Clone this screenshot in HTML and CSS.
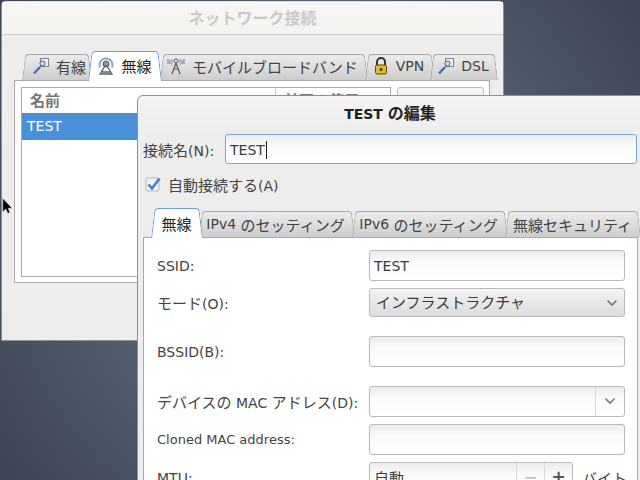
FILE: index.html
```html
<!DOCTYPE html>
<html lang="ja">
<head>
<meta charset="utf-8">
<title>ネットワーク接続</title>
<link rel="stylesheet" href="styles.css">
</head>
<body>
<main class="desktop">
  <section class="window back">
    <header class="back-title">ネットワーク接続</header>
    <div class="back-body">
      <nav class="tabs back-tabs">
        <span class="tab t-wired"><svg class="ico" viewBox="0 0 18 18"><rect x="8.500" y="1.500" width="8" height="8" fill="#eef1f4" stroke="#7d8690"/><path d="M2 16.500 8 10" stroke="#3d6fb0" stroke-width="2.400"/><circle cx="10.500" cy="6.500" r="2.600" fill="#cfd8e4" stroke="#56606c"/></svg><span class="ja">有線</span></span>
        <span class="tab active t-wifi"><svg class="ico" viewBox="0 0 18 18"><path d="M3 10.500a6.500 6.500 0 1 1 12 0" fill="none" stroke="#8fa6c8" stroke-width="2"/><circle cx="9" cy="7" r="3" fill="#8d97a6" stroke="#4f5966"/><path d="M3 17 8 9h2l5 8zM5 15h8" fill="none" stroke="#5a626c" stroke-width="1.300"/></svg><span class="ja">無線</span></span>
        <span class="tab t-mobile"><svg class="ico wide" viewBox="0 0 20 18"><path d="M2 2v5M4 3v4M16 3v4M18 2v5" stroke="#6e8fb8" stroke-width="1.200"/><path d="M6 2v6M14 2v6" stroke="#8a939e"/><circle cx="10" cy="4" r="2" fill="none" stroke="#555"/><path d="M10 6 6 17M10 6l4 11M8 12h4" fill="none" stroke="#555" stroke-width="1.200"/></svg><span class="ja">モバイルブロードバンド</span></span>
        <span class="tab t-vpn"><svg class="ico" viewBox="0 0 18 18"><path d="M5 8V5a4 4 0 0 1 8 0v3" fill="none" stroke="#333" stroke-width="2"/><rect x="3.500" y="8" width="11" height="9" rx="1.500" fill="#e8b923" stroke="#5c4a10"/><circle cx="9" cy="12.500" r="1.500" fill="#3a3008"/></svg>VPN</span>
        <span class="tab t-dsl"><svg class="ico" viewBox="0 0 18 18"><rect x="8.500" y="1.500" width="8" height="8" fill="#eef1f4" stroke="#7d8690"/><path d="M2 16.500 8 10" stroke="#3d6fb0" stroke-width="2.400"/><circle cx="10.500" cy="6.500" r="2.600" fill="#cfd8e4" stroke="#56606c"/></svg>DSL</span>
      </nav>
      <div class="back-frame">
        <div class="tree">
          <div class="tree-head"><span class="col-name ja">名前</span><span class="col-used ja">前回の使用</span></div>
          <div class="tree-row">TEST</div>
        </div>
        <div class="side-button ja">追加</div>
      </div>
    </div>
  </section>

  <section class="window front">
    <header class="front-title">TEST <span class="ja-title">の編集</span></header>
    <div class="name-row">
      <label class="name-label"><span class="ja">接続名</span>(N):</label>
      <div class="entry focused">TEST<i class="caret"></i></div>
    </div>
    <div class="check-row">
      <svg class="check" viewBox="0 0 16 16"><rect x="1" y="2" width="13" height="13" rx="2" fill="#f4f4f4" stroke="#b5b5b5"/><path d="M3.500 8.500 7 12.500 14.500 2.500" fill="none" stroke="#3f7fcf" stroke-width="2.600"/></svg>
      <span><span class="ja">自動接続する</span>(A)</span>
    </div>
    <nav class="tabs front-tabs">
      <span class="tab active f1"><span class="ja">無線</span></span>
      <span class="tab f2">IPv4&nbsp;<span class="ja">のセッティング</span></span>
      <span class="tab f3">IPv6&nbsp;<span class="ja">のセッティング</span></span>
      <span class="tab f4"><span class="ja">無線セキュリティ</span></span>
    </nav>
    <div class="form-frame">
      <div class="form-row r-ssid"><label>SSID:</label><div class="entry">TEST</div></div>
      <div class="form-row r-mode"><label><span class="ja">モード</span>(O):</label><div class="entry combo"><span class="ja">インフラストラクチャ</span><svg class="chev" viewBox="0 0 12 8"><path d="M1.500 1.500 6 6l4.500-4.500" fill="none" stroke="#777" stroke-width="1.600"/></svg></div></div>
      <div class="form-row r-bssid"><label>BSSID(B):</label><div class="entry"></div></div>
      <div class="form-row r-device"><label><span class="ja">デバイスの</span> MAC <span class="ja">アドレス</span>(D):</label><div class="entry with-button"><span class="drop"><svg class="chev" viewBox="0 0 12 8"><path d="M1.500 1.500 6 6l4.500-4.500" fill="none" stroke="#777" stroke-width="1.600"/></svg></span></div></div>
      <div class="form-row r-cloned"><label class="small">Cloned MAC address:</label><div class="entry"></div></div>
      <div class="form-row r-mtu"><label>MTU:</label><div class="entry spin"><span class="ja">自動</span><span class="spin-btn minus">−</span><span class="spin-btn plus">+</span></div><span class="unit ja">バイト</span></div>
    </div>
  </section>

  <svg class="pointer" viewBox="0 0 14 20"><path d="M2 1v16l3.500-3.500L8 18.500l2.500-1-2.200-5H13z" fill="#000" stroke="#ddd" stroke-width=".6"/></svg>
</main>
</body>
</html>
```
FILE: styles.css
```css
* { box-sizing: border-box; }
html, body { margin: 0; height: 100%; overflow: hidden; }
body {
  font-family: "DejaVu Sans", "Noto Sans CJK JP", sans-serif;
  font-size: 14px;
  color: #3a3a3a;
}
.ja { font-family: "Noto Sans CJK JP", sans-serif; font-size: 15px; }
.ja-title { font-family: "Noto Sans CJK JP", sans-serif; font-size: 16px; }
.desktop {
  position: relative;
  width: 640px;
  height: 480px;
  overflow: hidden;
  background: radial-gradient(circle at 320px 240px, #5c6778 0, #525d6f 220px, #3b4053 420px);
}
.window { position: absolute; background: #ededed; }

/* back window */
.back {
  left: 1px; top: 1px; width: 503px; height: 340px;
  border: 1px solid #8f8f8f;
  border-top-color: #ddd;
  border-radius: 5px 5px 0 0;
}
.back-title {
  height: 33px;
  background: linear-gradient(#f6f6f4, #f3f3f1);
  border-bottom: 1px solid #d0d0ce;
  color: #cacaca;
  font-family: "Noto Sans CJK JP", sans-serif;
  font-weight: bold;
  font-size: 16px;
  line-height: 30px;
  text-align: center;
}
.back-body { padding: 19px 0 0 12px; }

/* tabs: two skewed halves give the slanted sides */
.tabs { display: flex; height: 26px; align-items: stretch; }
.tab {
  position: relative;
  isolation: isolate;
  display: flex;
  align-items: center;
  justify-content: center;
  white-space: nowrap;
  color: #444;
  font-size: 14px;
  flex: none;
}
.tab::before,
.tab::after {
  content: "";
  position: absolute;
  top: 0;
  bottom: 0;
  width: calc(50% + 1px);
  z-index: -1;
  background: linear-gradient(#ececec, #cdcdcd);
  border-top: 1px solid #a9a9a9;
}
.tab::before {
  left: 0;
  border-left: 1px solid #a9a9a9;
  border-top-left-radius: 4px;
  transform: skewX(-7deg);
  transform-origin: bottom left;
}
.tab::after {
  right: 0;
  border-right: 1px solid #a9a9a9;
  border-top-right-radius: 4px;
  transform: skewX(7deg);
  transform-origin: bottom right;
}
.tab.active { color: #222; z-index: 1; margin-top: -3px; margin-bottom: -1px; padding-top: 1px; }
.tab.active::before,
.tab.active::after { background: #fff; border-color: #6a9fd8; }
.ico { width: 18px; height: 18px; margin-right: 6px; flex: none; }
.ico.wide { width: 20px; }
.back-tabs { padding-left: 8px; }
.back-tabs .tab { padding-bottom: 2px; }
.t-wired { width: 70px; padding-left: 4px; }
.t-wifi { width: 73px; margin-left: -4px; }
.t-mobile { width: 208px; margin-left: -1px; padding-right: 4px; }
.t-vpn { width: 69px; margin-left: -3px; padding-right: 3px; }
.t-dsl { width: 67px; margin-left: -4px; padding-right: 1px; }
.back-frame {
  position: relative;
  width: 476px;
  height: 203px;
  padding: 6px;
  background: #fff;
  border: 1px solid #a9a9a9;
}
.tree {
  width: 370px;
  height: 190px;
  border: 1px solid #a9a9a9;
  background: #fff;
}
.tree-head { display: flex; height: 25px; font-weight: bold; color: #777; line-height: 23px; }
.col-name { width: 254px; padding-left: 8px; border-right: 1px solid #c4c4c4; }
.col-used { padding-left: 8px; }
.tree-row {
  height: 27px;
  background: #4a90d9;
  color: #fff;
  line-height: 27px;
  padding-left: 5px;
}
.side-button {
  position: absolute;
  left: 382px; top: 6px;
  width: 87px; height: 30px;
  border: 1px solid #bbb;
  border-radius: 3px;
  background: linear-gradient(#f6f6f6, #e2e2e2);
  text-align: center;
  line-height: 28px;
  color: #777;
}

/* front window */
.front {
  left: 137px; top: 95px; width: 506px; height: 390px;
  border: 1px solid #909090;
  border-radius: 6px 0 0 0;
  background: linear-gradient(#f4f4f3 0, #ededed 38px);
}
.front-title {
  height: 38px;
  line-height: 32px;
  font-weight: bold;
  font-size: 14px;
  color: #222;
  text-align: center;
}
.name-row { display: flex; align-items: center; padding-left: 5px; }
.name-label { width: 82px; color: #444; flex: none; }
.entry {
  border: 1px solid #b9b9b9;
  border-radius: 3px;
  background: linear-gradient(#ececec, #fafafa 40%, #fff);
  height: 31px;
  line-height: 30px;
  padding-left: 4px;
  position: relative;
  color: #3a3a3a;
}
.focused { width: 412px; height: 30px; border-color: #74a6dc; }
.caret { display: inline-block; width: 1px; height: 18px; background: #222; vertical-align: -4px; margin-left: 1px; }
.check-row { display: flex; align-items: center; height: 20px; margin: 10px 0 0 7px; gap: 7px; color: #444; }
.check { width: 16px; height: 16px; flex: none; }
.front-tabs { margin: 17px 0 0 5px; padding-left: 8px; }
.f1 { width: 51px; }
.f2 { width: 156px; margin-left: -3px; padding-right: 3px; }
.f3 { width: 156px; margin-left: -3px; padding-right: 3px; }
.f4 { width: 135px; margin-left: -3px; }
.form-frame {
  position: relative;
  margin-left: 5px;
  width: 495px;
  height: 260px;
  background: #fff;
  border: 1px solid #a9a9a9;
  padding: 12px 11px 0 13px;
}
.form-row { display: flex; align-items: center; white-space: nowrap; }
.form-row label { width: 212px; flex: none; color: #444; }
.form-row label.small { font-size: 13px; }
.form-row .entry { width: 256px; flex: none; }
.r-mode { margin-top: 7px; }
.r-bssid { margin-top: 19px; }
.r-device { margin-top: 19px; }
.r-cloned { margin-top: 7px; }
.r-mtu { margin-top: 7px; height: 31px; }
.form-row .combo {
  height: 29px;
  line-height: 26px;
  padding-left: 6px;
  background: linear-gradient(#f3f3f3, #dcdcdc);
}
.chev { position: absolute; right: 6px; top: 10px; width: 12px; height: 8px; }
.drop { position: absolute; right: 0; top: 0; bottom: 0; width: 29px; border-left: 1px solid #d8d8d8; }
.drop .chev { right: 8px; }
.form-row .spin { width: 204px; }
.spin-btn { position: absolute; top: 0; bottom: 0; width: 28px; text-align: center; border-left: 1px solid #d8d8d8; font-size: 17px; line-height: 29px; }
.minus { right: 28px; color: #bbb; }
.plus { right: 0; color: #555; font-weight: bold; }
.unit { margin-left: 9px; color: #444; flex: none; }
.pointer { position: absolute; left: 1px; top: 197px; width: 12px; height: 18px; }
```
